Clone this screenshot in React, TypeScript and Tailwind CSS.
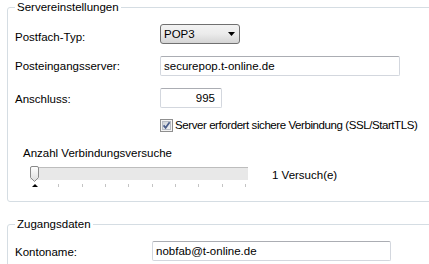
import React from "react";

const ticks = [0, 1, 2, 3, 4, 5, 6, 7, 8, 9];

function Check() {
  return (
    <svg width="13" height="13" viewBox="0 0 13 13" className="shrink-0">
      <defs>
        <linearGradient id="cb" x1="0" y1="0" x2="1" y2="1">
          <stop offset="0" stopColor="#cbcfd5" />
          <stop offset="1" stopColor="#f6f6f6" />
        </linearGradient>
      </defs>
      <rect x="0.5" y="0.5" width="12" height="12" fill="#f4f4f4" stroke="#8f8f8f" />
      <rect x="2.5" y="2.5" width="8" height="8" fill="url(#cb)" stroke="#b8bcc4" />
      <path d="M3.6 6.4 L5.6 8.8 L9.6 3.2" fill="none" stroke="#4a5d8a" strokeWidth="1.7" />
    </svg>
  );
}

export default function App() {
  return (
    <div className="w-[429px] h-[264px] overflow-hidden bg-white font-['Liberation_Sans',Arial,sans-serif] text-[11.5px] leading-[13px] text-black pl-[7px]">
      <fieldset className="m-0 p-0 -mr-[20px] border border-[#d5dde3] rounded-[3px]">
        <legend className="ml-[7px] px-[2px] leading-[14px]">Servereinstellungen</legend>
        <div className="pl-[7px] pt-[10px] pb-[10px]">
          <div className="flex h-[20px]">
            <span className="w-[145px] shrink-0 pt-[7px]">Postfach-Typ:</span>
            <div className="w-[80px] h-[20px] flex items-center justify-between pl-[3px] pr-[4px] border border-[#707070] rounded-[3px] bg-gradient-to-b from-[#f3f3f3] via-[#ebebeb] to-[#d4d4d4]">
              <span>POP3</span>
              <svg width="7" height="4" viewBox="0 0 7 4"><path d="M0 0 H7 L3.5 4 Z" fill="#000" /></svg>
            </div>
          </div>

          <div className="flex h-[20px] mt-[12px]">
            <span className="w-[145px] shrink-0 pt-[4px]">Posteingangsserver:</span>
            <div className="w-[240px] h-[20px] flex items-center pl-[3px] border border-[#d3d7de] border-t-[#abadb3] rounded-[2px]">
              securepop.t-online.de
            </div>
          </div>

          <div className="flex h-[20px] mt-[12px]">
            <span className="w-[145px] shrink-0 pt-[5px]">Anschluss:</span>
            <div className="w-[62px] h-[20px] flex items-center justify-end pr-[6px] border border-[#d3d7de] border-t-[#abadb3] rounded-[2px]">
              995
            </div>
          </div>

          <div className="flex items-center gap-[2px] h-[13px] mt-[11px] ml-[145px]">
            <Check />
            <span className="whitespace-nowrap tracking-[-0.42px]">Server erfordert sichere Verbindung (SSL/StartTLS)</span>
          </div>

          <div className="mt-[15px] ml-[8px]">Anzahl Verbindungsversuche</div>

          <div className="flex items-start mt-[5px] ml-[15px]">
            <div className="relative w-[218px] h-[26px]">
              <div className="mt-[2px] h-[13px] border-t border-[#bdbdbd] bg-[#e8e8e8]" />
              <svg width="9" height="16" viewBox="0 0 9 16" className="absolute left-0 top-[1px]">
                <defs>
                  <linearGradient id="th" x1="0" y1="0" x2="0" y2="1">
                    <stop offset="0" stopColor="#ffffff" />
                    <stop offset="1" stopColor="#dcdcdc" />
                  </linearGradient>
                </defs>
                <path d="M0.5 2 Q0.5 0.5 2 0.5 H7 Q8.5 0.5 8.5 2 V11.5 L4.5 15.5 L0.5 11.5 Z" fill="url(#th)" stroke="#8a8a8a" />
              </svg>
              <svg width="218" height="6" viewBox="0 0 218 6" className="block mt-[3px]">
                {ticks.map((i) =>
                  i === 0 ? (
                    <path key={i} d="M2 4 L5 1 L8 4 Z" fill="#000" />
                  ) : (
                    <rect key={i} x={Math.round(5 + i * 23.35)} y="1" width="1" height="3" fill="#c4c4c4" />
                  )
                )}
              </svg>
            </div>
            <span className="ml-[24px] mt-[4px] whitespace-nowrap">1 Versuch(e)</span>
          </div>
        </div>
      </fieldset>

      <fieldset className="m-0 mt-[15px] p-0 -mr-[20px] border border-[#d5dde3] rounded-[3px]">
        <legend className="ml-[7px] px-[2px] leading-[14px]">Zugangsdaten</legend>
        <div className="pl-[7px] pt-[10px] pb-[10px]">
          <div className="flex h-[20px]">
            <span className="w-[137px] shrink-0 pt-[5px]">Kontoname:</span>
            <div className="w-[239px] h-[20px] flex items-center pl-[3px] border border-[#d3d7de] border-t-[#abadb3] rounded-[2px]">
              nobfab@t-online.de
            </div>
          </div>
        </div>
      </fieldset>
    </div>
  );
}
